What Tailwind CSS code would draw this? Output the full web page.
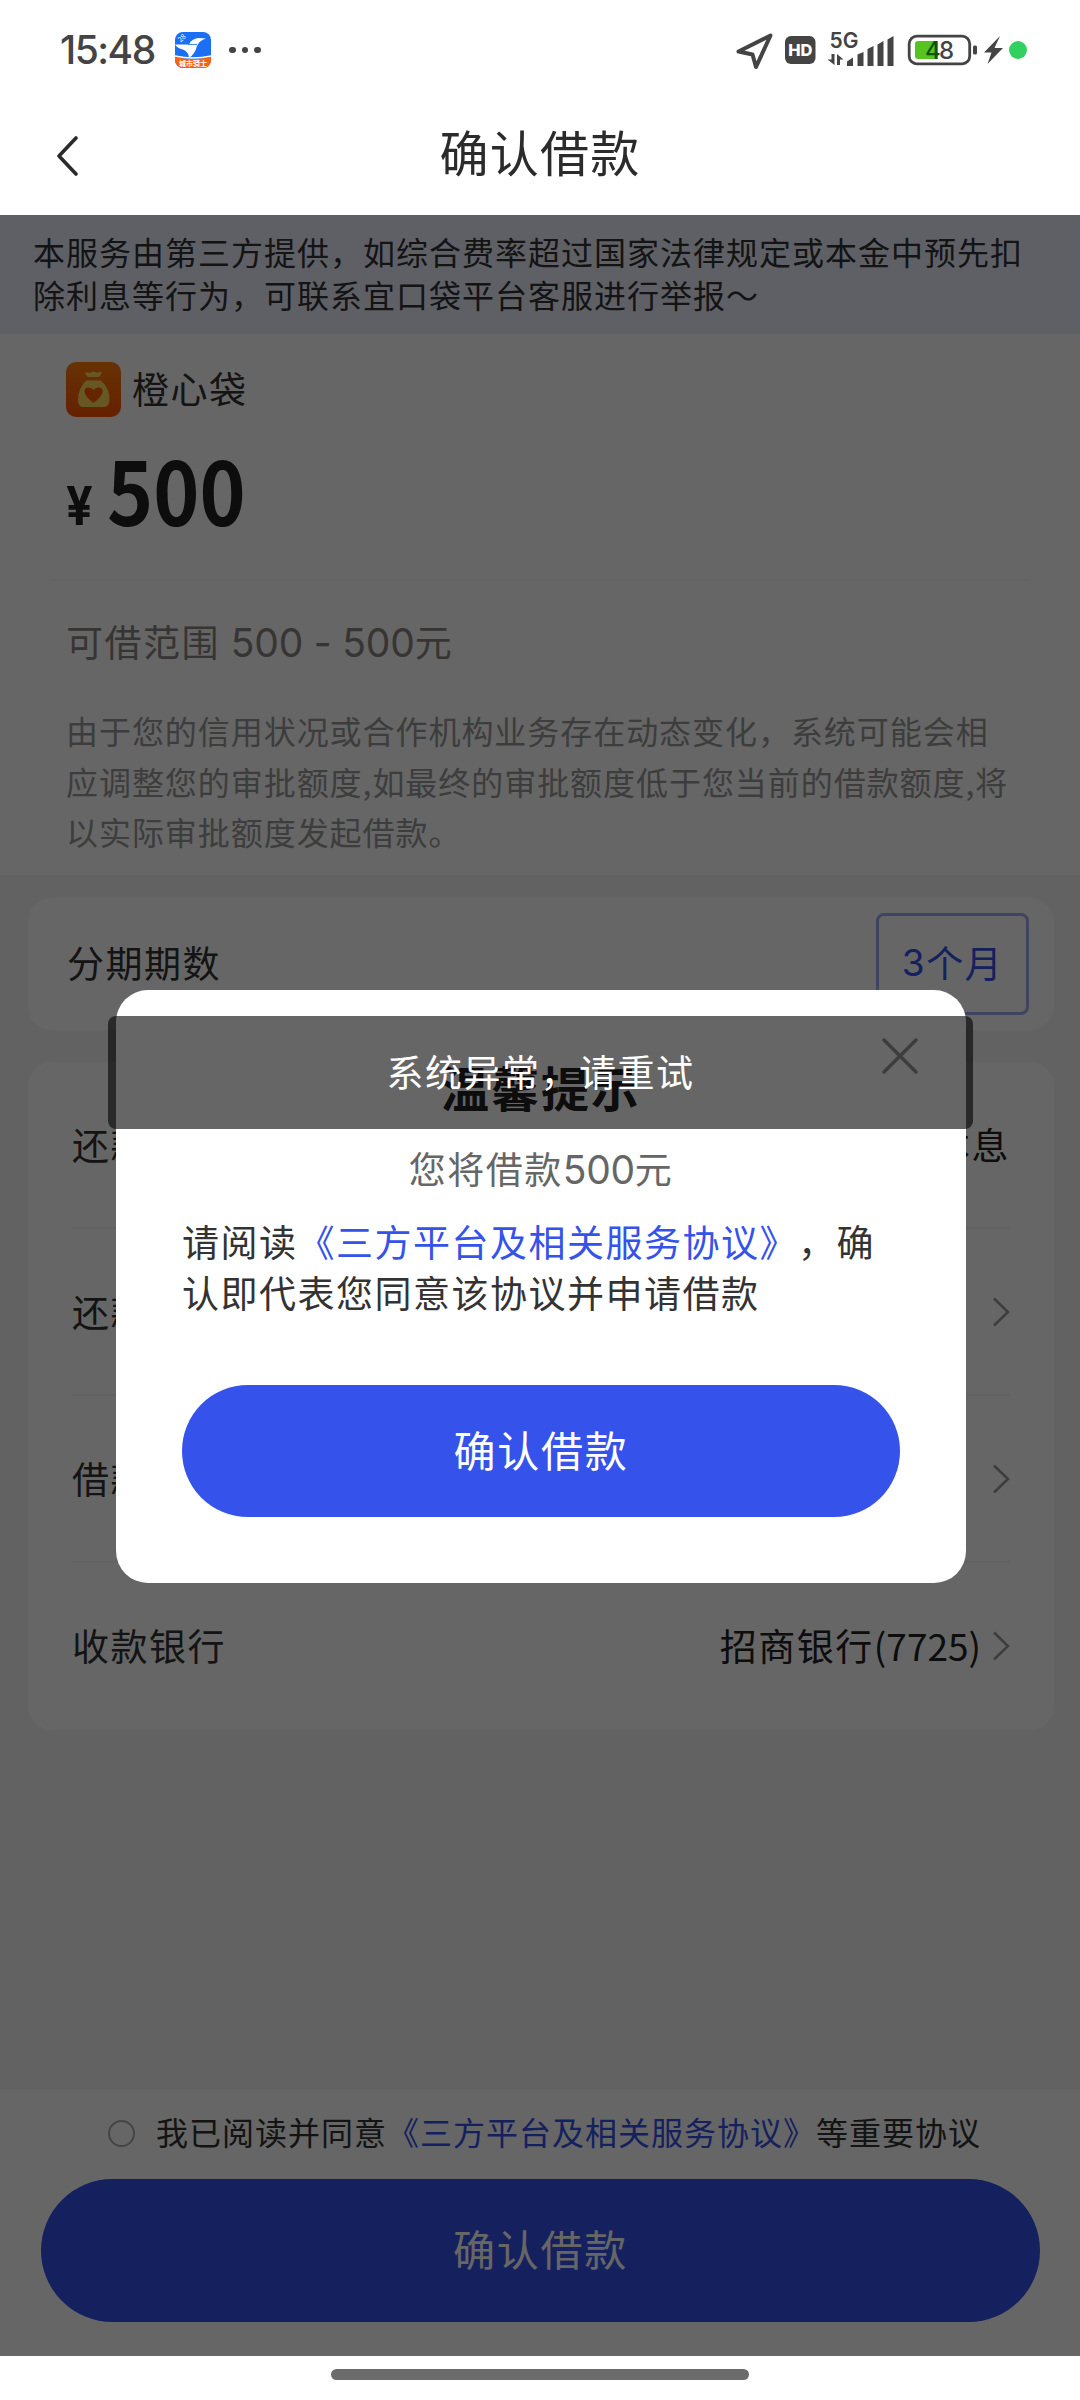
<!DOCTYPE html>
<html lang="zh-CN">

<head>
    <meta charset="UTF-8">
    <meta name="viewport" content="width=device-width, initial-scale=1.0">
    <title>确认借款</title>
    <script src="https://cdn.jsdelivr.net/npm/@tailwindcss/browser@4"></script>
</head>

<body class="w-[1080px] h-[2400px] overflow-hidden bg-white font-['Noto_Sans_CJK_SC',sans-serif] [text-spacing-trim:space-all]">
    <div class="flex flex-col h-full">
        <!-- Status bar -->
        <div class="flex items-center h-[100px] pl-[60px] pr-[52px] shrink-0 text-[#444]">
            <span class="w-[115px] text-[39px] font-medium font-['Inter',sans-serif] tracking-[-1.500px]">15:48</span>
            <svg class="w-9 h-9" viewBox="0 0 36 36">
                <defs>
                    <clipPath id="app"><rect width="36" height="36" rx="8" /></clipPath>
                </defs>
                <g clip-path="url(#app)">
                    <rect width="36" height="36" fill="#1b6ff5" />
                    <path d="M0 25 Q18 29 36 25 V36 H0Z" fill="#f7640f" />
                    <path d="M0 24 Q18 28 36 24" fill="none" stroke="#fff" stroke-width="1.4" />
                    <path d="M0 12.500 H14 Q17 6 24 6 L31 6.500 Q24 8.500 22 14 Q20 22 14 26 Q14 20 8 17.500 Q2 16 0 12.500Z" fill="#fff" />
                    <path d="M13 12.500 H22" stroke="#1b6ff5" stroke-width="0.8" />
                    <text x="18" y="34" font-size="7" font-weight="700" fill="#fff" text-anchor="middle">城市骑士</text>
                    <text x="3" y="10" font-size="7" fill="#fff" transform="rotate(-40 5 7)">28</text>
                </g>
            </svg>
            <div class="flex gap-[6px] ml-[18px]">
                <i class="w-[6.5px] h-[6.5px] rounded-full bg-[#444]"></i>
                <i class="w-[6.5px] h-[6.5px] rounded-full bg-[#444]"></i>
                <i class="w-[6.5px] h-[6.5px] rounded-full bg-[#444]"></i>
            </div>
            <svg class="ml-auto w-[294px] h-[60px]" viewBox="734 20 294 60">
                <path d="M738.500 51.500 L770.500 35.500 L756 67 L752.500 54.500Z" fill="none" stroke="#444" stroke-width="4" stroke-linejoin="round" />
                <rect x="785" y="36" width="30.500" height="28" rx="6" fill="#444" />
                <text x="800.300" y="56" font-family="Inter" font-size="16.500" font-weight="800" fill="#fff" text-anchor="middle">HD</text>
                <text x="829.500" y="48" font-family="Inter" font-size="21" font-weight="600" fill="#444">5G</text>
                <g fill="#444">
                    <path d="M831.500 54 h3 v11 l-7 -5.500 h4z M837 65 v-11 l6.500 5.500 h-3.500 v5.500z" />
                    <path d="M847 61.500 l6 -4 v8.500 h-6z M857.500 54.500 l6 -2.500 v14 h-6z M867.500 49 l6 -3 v20 h-6z M877.500 44.500 l6 -3.500 v25 h-6z M887.500 39.500 l6 -3.500 v30 h-6z" />
                    <rect x="973" y="45.500" width="4" height="9" rx="1.500" />
                    <path d="M1000 36 L984 52.500 H991.500 L987.500 64 L1003 48 H994.500Z" />
                </g>
                <rect x="909.200" y="36.200" width="60.500" height="27.600" rx="7.500" fill="none" stroke="#444" stroke-width="2.800" />
                <path d="M918 41 h20 v18 h-20 q-3 0 -3 -3 v-12 q0 -3 3 -3z" fill="#56c322" />
                <text x="925" y="59" font-family="Inter" font-size="24" font-weight="500" fill="#0c5400">4</text>
                <text x="939" y="59" font-family="Inter" font-size="24" font-weight="500" fill="#444">8</text>
                <circle cx="1018" cy="50" r="9" fill="#30d160" />
            </svg>
        </div>

        <!-- Title bar -->
        <div class="grid grid-cols-3 items-center h-[115px] px-14 pb-[6px] shrink-0 text-[#2b2b2b]">
            <svg class="w-[24px] h-[42px]" viewBox="0 0 24 42" fill="none" stroke="#2b2b2b" stroke-width="3.600" stroke-linecap="round" stroke-linejoin="round">
                <path d="M20 4 L3 22 L20 40" />
            </svg>
            <h1 class="text-center text-[49px] leading-[70px] tracking-[1.300px] pb-2">确认借款</h1>
        </div>

        <!-- Page content, dimmed by the mask -->
        <div class="relative flex flex-col h-[2141px] shrink-0 bg-[#f5f5f5]">
            <p class="h-[119px] shrink-0 bg-[#eef0fd] pl-[33px] pt-[15px] text-[32px] leading-[43px] tracking-[1px] text-[#333] whitespace-nowrap">
                本服务由第三方提供，如综合费率超过国家法律规定或本金中预先扣<br>除利息等行为，可联系宜口袋平台客服进行举报～
            </p>

            <div class="h-[541px] shrink-0 bg-white pt-7 px-[50px]">
                <div class="flex items-center gap-[11px] pl-4">
                    <svg class="w-[55px] h-[55px]" viewBox="0 0 55 55">
                        <defs>
                            <linearGradient id="logo" x1="0" y1="0" x2="0" y2="1">
                                <stop offset="0" stop-color="#ff7f0c" />
                                <stop offset="1" stop-color="#ff5200" />
                            </linearGradient>
                        </defs>
                        <rect width="55" height="55" rx="10" fill="url(#logo)" />
                        <path d="M21.500 15 L19 11.500 Q20.500 9.500 23.500 11 Q27.500 8 31 11 Q34 8.500 36 11 L33 15Z" fill="#ffd95c" />
                        <path d="M20 18.500 H35 Q44 27 43.500 38 Q43 45 38 45 H17 Q12 45 12 38 Q12 27 20 18.500Z" fill="#ffd95c" />
                        <path d="M27.500 41 Q18.500 34 18.500 29.500 Q18.500 25.500 22.500 25.500 Q26 25.500 27.500 28 Q29 25.500 32.500 25.500 Q36.500 25.500 36.500 29.500 Q36.500 34 27.500 41Z" fill="#ff5a00" />
                    </svg>
                    <span class="text-[37px] leading-[52px] pb-[3px] tracking-[1.500px] text-[#333]">橙心袋</span>
                </div>
                <div class="flex items-start h-[162px] pl-4 text-[#222] font-bold">
                    <span class="w-[41px] pt-[64px] origin-left scale-x-[0.87] text-[54px] leading-[50px] font-['Inter',sans-serif]">¥</span>
                    <span class="inline-block pt-[23px] origin-left scale-x-[0.89] text-[88px] leading-[96px]">500</span>
                </div>
                <div class="border-t-2 border-[#f9f9f9] pt-[33px] pl-[16px]">
                    <p class="text-[37px] leading-[54px] tracking-[1.500px] text-[#8a8680] whitespace-pre">可借范围<span class="text-[39px] font-['Inter',sans-serif] tracking-[-0.200px]"> 500 - 500</span>元</p>
                    <p class="mt-[35px] text-[32px] leading-[50.500px] tracking-[0.950px] text-[#999] whitespace-nowrap">
                        由于您的信用状况或合作机构业务存在动态变化，系统可能会相<br>应调整您的审批额度,如最终的审批额度低于您当前的借款额度,将<br>以实际审批额度发起借款。
                    </p>
                </div>
            </div>

            <div class="flex items-center justify-between h-[132px] mt-[23px] ml-[28px] mr-[26px] pl-[39px] pr-[25px] shrink-0 rounded-3xl bg-white text-[37px] tracking-[1.500px]">
                <span class="pb-[3px] text-[#333]">分期期数</span>
                <span class="flex items-center justify-center w-[153px] h-[102px] pb-[3px] rounded-lg border-3 border-[#9eabf0] text-[#3552ea]"><span class="font-['Inter',sans-serif]">3</span>个月</span>
            </div>

            <div class="mt-8 ml-[28px] mr-[26px] pl-[44px] pr-[44px] shrink-0 rounded-3xl bg-white text-[37px] tracking-[1.500px] text-[#333]">
                <div class="flex items-center justify-between h-[167px] border-b-2 border-[#f5f5f5]">
                    <span>还款方式</span>
                    <span class="text-[#222]">等额本息</span>
                </div>
                <div class="flex items-center justify-between h-[167px] border-b-2 border-[#f5f5f5]">
                    <span>还款计划</span>
                    <svg class="w-[18px] h-[30px]" viewBox="0 0 18 30" fill="none" stroke="#999" stroke-width="2.500"><path d="M2 1.500 L16 15 L2 28.500" /></svg>
                </div>
                <div class="flex items-center justify-between h-[167px] border-b-2 border-[#f5f5f5]">
                    <span>借款用途</span>
                    <svg class="w-[18px] h-[30px]" viewBox="0 0 18 30" fill="none" stroke="#999" stroke-width="2.500"><path d="M2 1.500 L16 15 L2 28.500" /></svg>
                </div>
                <div class="flex items-center h-[167px] pb-[2px]">
                    <span class="mr-auto">收款银行</span>
                    <span class="mr-[11px] text-[#222]">招商银行<span class="tracking-normal">(7725)</span></span>
                    <svg class="w-[18px] h-[30px]" viewBox="0 0 18 30" fill="none" stroke="#999" stroke-width="2.500"><path d="M2 1.500 L16 15 L2 28.500" /></svg>
                </div>
            </div>

            <div class="mt-auto h-[267px] shrink-0 bg-white px-[41px] pt-[22px]">
                <div class="flex items-center h-[44px] pl-[67px] text-[32px] tracking-[1px] text-[#333] whitespace-nowrap">
                    <i class="w-[27px] h-[27px] mr-[21px] rounded-full border-2 border-[#aaa]"></i>
                    <p class="pb-[5px]">我已阅读并同意<span class="text-[#3552ea]">《三方平台及相关服务协议》</span>等重要协议</p>
                </div>
                <button class="mt-6 pb-[6px] w-[999px] h-[143px] rounded-full bg-[#3552ea] text-white text-[42px] tracking-[1.700px]">确认借款</button>
            </div>

            <!-- Mask with the dialog -->
            <div class="absolute inset-0 bg-black/60 pt-[775px] pl-[116px]">
                <div class="flex flex-col items-center w-[850px] h-[593px] rounded-[32px] bg-white px-[66px] pt-[66px] text-[#333]">
                    <h2 class="text-[48px] leading-[60px] font-bold tracking-[2px] text-[#222]">温馨提示</h2>
                    <p class="mt-[25px] text-[37px] leading-[54px] tracking-[1.500px] text-[#666]">您将借款<span class="text-[39px] font-['Inter',sans-serif] tracking-[-0.300px]">500</span>元</p>
                    <p class="mt-[19px] w-full text-[37px] leading-[51px] tracking-[1.500px] whitespace-nowrap">
                        请阅读<span class="text-[#3552ea]">《三方平台及相关服务协议》</span>，确<br>认即代表您同意该协议并申请借款
                    </p>
                    <button class="mt-[67px] pb-[6px] w-[718px] h-[132px] shrink-0 rounded-full bg-[#3552ea] text-white text-[42px] tracking-[1.700px]">确认借款</button>
                </div>
                <svg class="absolute left-[882px] top-[823px] w-9 h-9" viewBox="0 0 36 36" stroke="#999" stroke-width="3.500" stroke-linecap="round"><path d="M2 2 L34 34 M34 2 L2 34" /></svg>
            </div>

            <!-- Toast -->
            <div class="absolute left-[108px] top-[801px] flex items-center justify-center w-[865px] h-[113px] pb-[2px] rounded-lg bg-black/60 text-white text-[37px] tracking-[1.500px]">系统异常，请重试</div>
        </div>

        <!-- Home indicator -->
        <div class="flex justify-center pt-[13px]">
            <div class="w-[418px] h-[11px] rounded-full bg-[#6b6b6b]"></div>
        </div>
    </div>
</body>

</html>
